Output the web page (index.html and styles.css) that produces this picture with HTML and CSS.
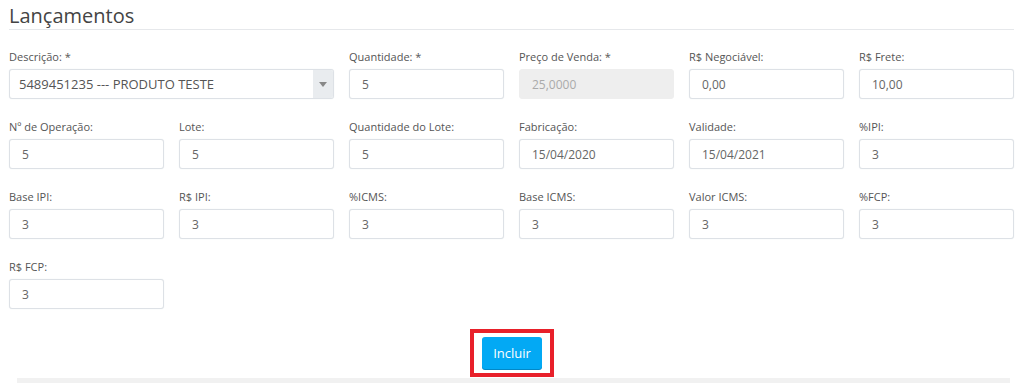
FILE: index.html
```html
<!DOCTYPE html>
<html lang="pt-BR">

<head>
    <meta charset="UTF-8">
    <meta name="viewport" content="width=device-width, initial-scale=1.0">
    <title>Lançamentos</title>
    <link rel="stylesheet" href="styles.css">
</head>

<body>
    <div class="panel">
        <h2 class="title">Lançamentos</h2>

        <form class="form-grid">
            <div class="field span-2">
                <label>Descrição: *</label>
                <div class="select">
                    <span class="select-value">5489451235 --- PRODUTO TESTE</span>
                    <span class="select-arrow"></span>
                </div>
            </div>
            <div class="field">
                <label>Quantidade: *</label>
                <input type="text" value="5">
            </div>
            <div class="field">
                <label>Preço de Venda: *</label>
                <input type="text" value="25,0000" disabled>
            </div>
            <div class="field">
                <label>R$ Negociável:</label>
                <input type="text" value="0,00">
            </div>
            <div class="field">
                <label>R$ Frete:</label>
                <input type="text" value="10,00">
            </div>

            <div class="field">
                <label>Nº de Operação:</label>
                <input type="text" value="5">
            </div>
            <div class="field">
                <label>Lote:</label>
                <input type="text" value="5">
            </div>
            <div class="field">
                <label>Quantidade do Lote:</label>
                <input type="text" value="5">
            </div>
            <div class="field">
                <label>Fabricação:</label>
                <input type="text" value="15/04/2020">
            </div>
            <div class="field">
                <label>Validade:</label>
                <input type="text" value="15/04/2021">
            </div>
            <div class="field">
                <label>%IPI:</label>
                <input type="text" value="3">
            </div>

            <div class="field">
                <label>Base IPI:</label>
                <input type="text" value="3">
            </div>
            <div class="field">
                <label>R$ IPI:</label>
                <input type="text" value="3">
            </div>
            <div class="field">
                <label>%ICMS:</label>
                <input type="text" value="3">
            </div>
            <div class="field">
                <label>Base ICMS:</label>
                <input type="text" value="3">
            </div>
            <div class="field">
                <label>Valor ICMS:</label>
                <input type="text" value="3">
            </div>
            <div class="field">
                <label>%FCP:</label>
                <input type="text" value="3">
            </div>

            <div class="field">
                <label>R$ FCP:</label>
                <input type="text" value="3">
            </div>
        </form>

        <div class="actions">
            <div class="highlight">
                <button type="button" class="btn-incluir">Incluir</button>
            </div>
        </div>
    </div>
    <div class="footer-bar"></div>
</body>

</html>
```

FILE: styles.css
```css
body {
    font-family: "Open Sans", "Liberation Sans", sans-serif;
    margin: 0;
    padding: 0;
    background-color: #fff;
    color: #555;
}

.panel {
    padding: 0 10px 0 9px;
}

.title {
    margin: 0;
    padding-top: 2px;
    font-size: 20px;
    font-weight: 400;
    line-height: 27px;
    color: #444;
    border-bottom: 1px solid #e6e8eb;
}

.form-grid {
    display: grid;
    grid-template-columns: repeat(6, 1fr);
    column-gap: 15px;
    row-gap: 20px;
    margin-top: 19px;
}

.field {
    display: flex;
    flex-direction: column;
}

.span-2 {
    grid-column: span 2;
}

.field label {
    font-size: 11px;
    line-height: 15px;
    margin-bottom: 5px;
    color: #555;
}

.field input,
.select {
    box-sizing: border-box;
    height: 30px;
    width: 100%;
    border: 1px solid #dde1e6;
    box-shadow: 0 0 1px #dfe3e8;
    border-radius: 3px;
    background-color: #fff;
    font-family: inherit;
    font-size: 12px;
    color: #666;
}

.field input {
    padding: 0 12px;
}

.field input:disabled {
    background-color: #eee;
    border-color: #eee;
    box-shadow: none;
    color: #aaa;
}

.select {
    display: flex;
    align-items: center;
    overflow: hidden;
}

.select-value {
    flex: 1;
    padding-left: 9px;
    font-size: 13px;
    color: #555;
}

.select-arrow {
    width: 20px;
    height: 100%;
    background-color: #e9ecef;
    display: flex;
    align-items: center;
    justify-content: center;
}

.select-arrow::after {
    content: "";
    border-left: 4px solid transparent;
    border-right: 4px solid transparent;
    border-top: 5px solid #888;
}

.actions {
    display: flex;
    justify-content: center;
    margin-top: 20px;
}

.highlight {
    border: 4px solid #e8202a;
    padding: 4px 8px;
    margin-left: 1px;
}

.btn-incluir {
    display: block;
    width: 60px;
    height: 32px;
    border: none;
    border-radius: 3px;
    background-color: #03a9f4;
    box-shadow: 0 1px 0 #0288c7;
    color: #fff;
    font-family: inherit;
    font-size: 13px;
    cursor: pointer;
}

.footer-bar {
    height: 6px;
    margin: 1px 14px 0 17px;
    background-color: #f1f1f1;
}
```
